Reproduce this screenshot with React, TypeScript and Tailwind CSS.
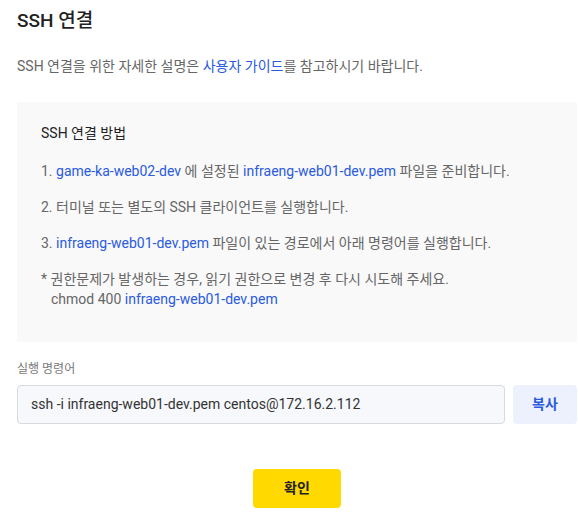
export default function App() {
  const link = "text-[#2a5ae0]";
  return (
    <div
      className="w-[578px] h-[512px] bg-white overflow-hidden pl-[17px] pt-[8px]"
      style={{ fontFamily: 'Roboto, "Noto Sans CJK KR", sans-serif' }}
    >
      <div className="w-[560px]">
        {/* Title */}
        <h1 className="text-[19px] font-medium text-[#222] leading-[26px]">SSH 연결</h1>

        {/* Description */}
        <p className="mt-[22px] text-[14px] leading-[20px] text-[#666]">
          SSH 연결을 위한 자세한 설명은 <span className={link}>사용자 가이드</span>를 참고하시기 바랍니다.
        </p>

        {/* Guide box */}
        <div className="mt-[26px] bg-[#f9f9fa] h-[240px] pl-[24px] pt-[21px] text-[14px] leading-[20px] text-[#666]">
          <p className="text-[#222]">SSH 연결 방법</p>
          <p className="mt-[18px]">
            1. <span className={link}>game-ka-web02-dev</span> 에 설정된{" "}
            <span className={link}>infraeng-web01-dev.pem</span> 파일을 준비합니다.
          </p>
          <p className="mt-[16px]">2. 터미널 또는 별도의 SSH 클라이언트를 실행합니다.</p>
          <p className="mt-[16px]">
            3. <span className={link}>infraeng-web01-dev.pem</span> 파일이 있는 경로에서 아래 명령어를 실행합니다.
          </p>
          <p className="mt-[16px]">* 권한문제가 발생하는 경우, 읽기 권한으로 변경 후 다시 시도해 주세요.</p>
          <p className="pl-[10px]">
            chmod 400 <span className={link}>infraeng-web01-dev.pem</span>
          </p>
        </div>

        {/* Command */}
        <p className="mt-[19px] text-[12px] leading-[16px] text-[#777]">실행 명령어</p>
        <div className="mt-[8px] flex gap-[8px]">
          <div className="flex-1 h-[39px] flex items-center px-[13px] bg-[#f7f8fb] border border-[#d6d9de] rounded-[4px] text-[14px] text-[#333]">
            ssh -i infraeng-web01-dev.pem centos@172.16.2.112
          </div>
          <button className="w-[64px] h-[39px] bg-[#edf1fd] rounded-[4px] text-[14px] font-bold text-[#2a5ae0]">
            복사
          </button>
        </div>

        {/* Confirm */}
        <div className="mt-[45px] flex justify-center">
          <button className="w-[88px] h-[39px] bg-[#ffd900] rounded-[4px] text-[14px] font-bold text-[#222]">
            확인
          </button>
        </div>
      </div>
    </div>
  );
}
